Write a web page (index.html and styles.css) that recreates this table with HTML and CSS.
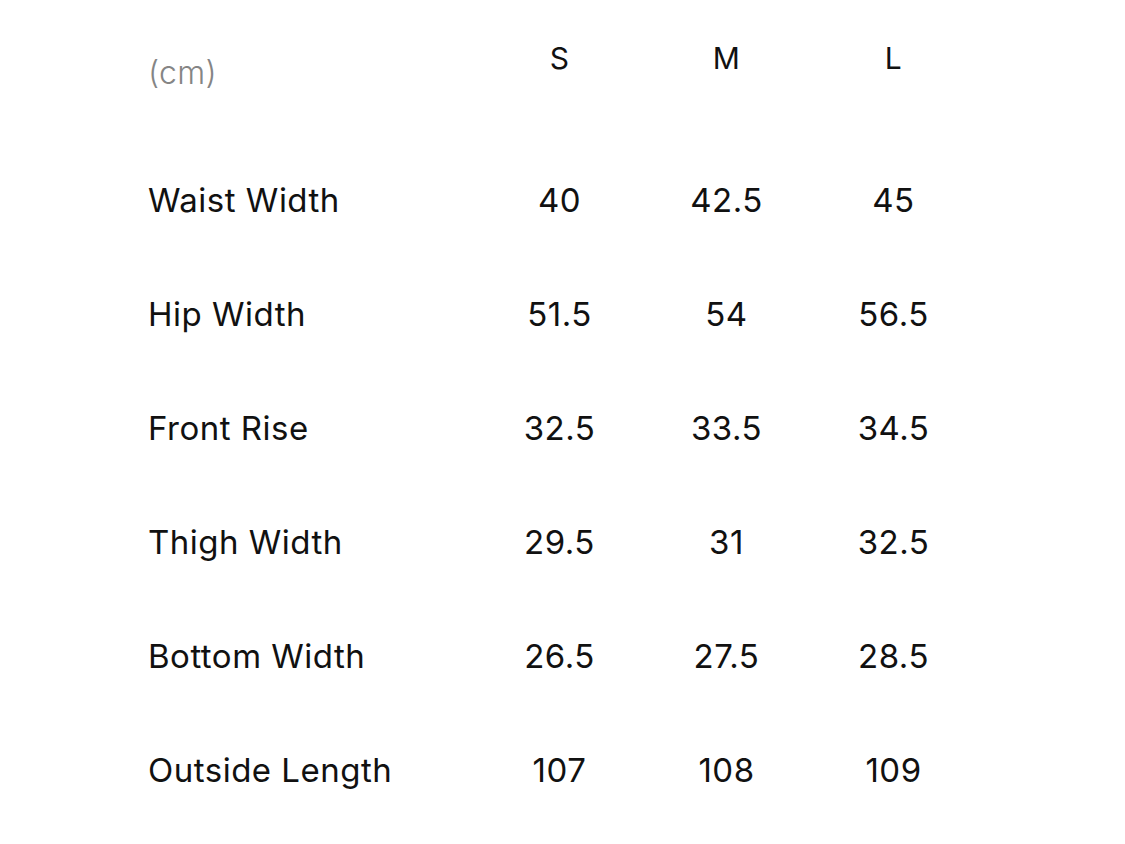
FILE: index.html
```html
<!DOCTYPE html>
<html>
<head>
<meta charset="utf-8">
<link rel="stylesheet" href="styles.css">
</head>
<body>
<div class="table">
  <div class="row head">
    <div class="label unit">(cm)</div>
    <div class="cell">S</div>
    <div class="cell">M</div>
    <div class="cell">L</div>
  </div>
  <div class="row">
    <div class="label">Waist Width</div>
    <div class="cell">40</div>
    <div class="cell">42.5</div>
    <div class="cell">45</div>
  </div>
  <div class="row">
    <div class="label">Hip Width</div>
    <div class="cell">51.5</div>
    <div class="cell">54</div>
    <div class="cell">56.5</div>
  </div>
  <div class="row">
    <div class="label">Front Rise</div>
    <div class="cell">32.5</div>
    <div class="cell">33.5</div>
    <div class="cell">34.5</div>
  </div>
  <div class="row">
    <div class="label">Thigh Width</div>
    <div class="cell">29.5</div>
    <div class="cell">31</div>
    <div class="cell">32.5</div>
  </div>
  <div class="row">
    <div class="label">Bottom Width</div>
    <div class="cell">26.5</div>
    <div class="cell">27.5</div>
    <div class="cell">28.5</div>
  </div>
  <div class="row">
    <div class="label">Outside Length</div>
    <div class="cell">107</div>
    <div class="cell">108</div>
    <div class="cell">109</div>
  </div>
</div>
</body>
</html>
```

FILE: styles.css
```css
html, body {
  margin: 0;
  padding: 0;
  background: #ffffff;
}
body {
  font-family: Inter, "Liberation Sans", sans-serif;
  color: #111111;
  width: 1125px;
  height: 844px;
  overflow: hidden;
}
.table {
  padding: 38px 0 0 148px;
  display: flex;
  flex-direction: column;
}
.row {
  display: grid;
  grid-template-columns: 328px 167px 167px 167px;
  height: 114px;
  align-items: center;
  font-size: 33px;
  line-height: 40px;
  letter-spacing: 0.5px;
}
.row.head {
  align-items: start;
  height: 105px;
}
.head .cell {
  font-size: 30px;
}
.cell {
  text-align: center;
}
.unit {
  color: #858585;
  font-weight: 300;
  font-size: 32px;
  padding-top: 15px;
  letter-spacing: 0.3px;
}
```
